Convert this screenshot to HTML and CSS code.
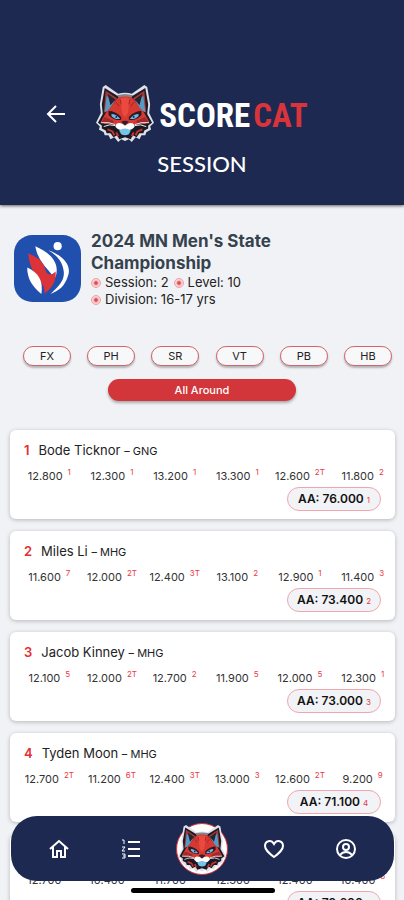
FILE: index.html
```
<!DOCTYPE html>
<html lang="en">
<head>
    <meta charset="UTF-8">
    <meta name="viewport" content="width=device-width, initial-scale=1">
    <title>ScoreCat - Session</title>
    <link rel="stylesheet" href="styles.css">
</head>
<body>
<svg class="sprite" aria-hidden="true">
    <symbol id="cat" viewBox="0 0 60 60">
        <path d="M7 2 L10 0 L23 9 Q30 7 37 9 L50 0 L53 2 L56 20 L55 29 L60 39 L56 43 L57 46 L52 49 L51 52 L47 52 L45 56 L41 54 L37 59 L34 56 L30 58 L26 56 L23 59 L19 54 L15 56 L13 52 L9 52 L8 49 L3 46 L4 43 L0 39 L5 29 L4 20Z" fill="#dfe1e8"/>
        <path d="M9 3 L22 11 Q30 9 38 11 L51 3 L54 20 L53 30 L58 39 L54 42 L54 45 L50 47 L49 50 L45 50 L42 54 L38 52 L36 56 L30 54 L24 56 L22 52 L18 54 L15 50 L11 50 L10 47 L6 45 L6 42 L2 39 L7 30 L6 20Z" fill="#1c1a22"/>
        <path d="M22 11 Q30 8 38 11 L36 14 H24Z" fill="#85858d"/>
        <path d="M10 6 L22 14 L14 25 L8 29Z M50 6 L38 14 L46 25 L52 29Z" fill="#a8363a"/>
        <path d="M11 11 L19 17 L13 27 L9 28Z M49 11 L41 17 L47 27 L51 28Z" fill="#5799c2"/>
        <path d="M12 9 L20 15 L15 21Z M48 9 L40 15 L45 21Z" fill="#22242f"/>
        <path d="M23 13 Q30 11 37 13 L45 23 L50 29 L55 38 L48 42 L38 42 L34 45 H26 L22 42 L12 42 L5 38 L10 29 L15 23Z" fill="#d73831"/>
        <path d="M25 14 Q30 12 35 14 L33 29 L30 34 L27 29Z" fill="#ea4a3d"/>
        <path d="M9 33 L18 37 L18 41 L6 38Z M51 33 L42 37 L42 41 L54 38Z" fill="#9d2a2c"/>
        <path d="M25 15 L26 20 M35 15 L34 20 M21 18 L24 22 M39 18 L36 22" stroke="#9a2528" stroke-width="1"/>
        <path d="M13 27 Q20 27 26 33 L26 36 Q18 37 13 31Z M47 27 Q40 27 34 33 L34 36 Q42 37 47 31Z" fill="#2a1a22"/>
        <path d="M16 30 Q21 30 25 35 Q19 36 16 32Z M44 30 Q39 30 35 35 Q41 36 44 32Z" fill="#6db9e2"/>
        <circle cx="21" cy="33" r="1" fill="#142344"/>
        <circle cx="39" cy="33" r="1" fill="#142344"/>
        <path d="M6 40 L20 41 L23 43 L27 46 H33 L37 43 L40 41 L54 40 L50 45 L43 47 L38 52 H22 L17 47 L10 45Z" fill="#191922"/>
        <path d="M5 39 Q14 38 20 41 M8 43 Q14 40 20 42 M55 39 Q46 38 40 41 M52 43 Q46 40 40 42" stroke="#eceef3" stroke-width="1" fill="none"/>
        <path d="M27 40 Q21 38 20 43 Q23 48 30 46 Q37 48 40 43 Q39 38 33 40 L30 42Z" fill="#fff"/>
        <path d="M26 38 Q30 36 34 38 L30 42Z" fill="#30202a"/>
        <path d="M24 47 Q30 43 36 47 L34 51 Q30 53 26 51Z" fill="#76c4e9"/>
        <path d="M12 46 L17 48 L19 52 M48 46 L43 48 L41 52 M21 49 L23 53 M39 49 L37 53" stroke="#c63334" stroke-width="2" fill="none"/>
    </symbol>
</svg>

<header class="header">
    <div class="brand-row">
        <button class="back" aria-label="Back">
            <svg viewBox="0 0 20 20"><path d="M19 10H2M10 2L2 10l8 8"/></svg>
        </button>
        <div class="brand">
            <svg class="brand-cat"><use href="#cat"/></svg>
            <span class="wordmark">SCORE<span class="red">CAT</span></span>
        </div>
    </div>
    <h1>SESSION</h1>
</header>

<main>
    <section class="event">
        <svg class="event-logo" viewBox="0 0 66 66">
            <rect width="66" height="66" rx="18" fill="#204fae"/>
            <circle cx="43" cy="11" r="4" fill="#fff"/>
            <path d="M21 11 C35 17 43 26 42 36 C42 39 41 41 40 43 C35 34 24 28 21 11Z" fill="#fff"/>
            <path d="M14 18 C22 22 29 24 31 35 C33 40 37 40 41 36 C42 47 36 53 30 58 C32 45 16 43 14 18Z" fill="#dc3338"/>
            <path d="M13 32 C24 37 29 45 27 58 C18 51 13 43 13 32Z" fill="#fff"/>
            <path d="M34 15 C50 21 57 31 53 41 C50 50 45 55 36 58 C45 50 50 44 49 36 C48 26 42 20 34 15Z" fill="#fff"/>
        </svg>
        <div class="event-text">
            <h2>2024 MN Men's State Championship</h2>
            <ul class="meta">
                <li>Session: 2</li>
                <li>Level: 10</li>
                <li>Division: 16-17 yrs</li>
            </ul>
        </div>
    </section>

    <div class="filters">
        <button>FX</button>
        <button>PH</button>
        <button>SR</button>
        <button>VT</button>
        <button>PB</button>
        <button>HB</button>
    </div>
    <button class="all-around">All Around</button>

    <section class="cards">
        <article class="card">
            <h3><span class="rank">1</span>Bode Ticknor <small>– GNG</small></h3>
            <div class="scores">
                <span>12.800<sup>1</sup></span><span>12.300<sup>1</sup></span><span>13.200<sup>1</sup></span>
                <span>13.300<sup>1</sup></span><span>12.600<sup>2T</sup></span><span>11.800<sup>2</sup></span>
            </div>
            <div class="total">AA: 76.000 <span>1</span></div>
        </article>
        <article class="card">
            <h3><span class="rank">2</span>Miles Li <small>– MHG</small></h3>
            <div class="scores">
                <span>11.600<sup>7</sup></span><span>12.000<sup>2T</sup></span><span>12.400<sup>3T</sup></span>
                <span>13.100<sup>2</sup></span><span>12.900<sup>1</sup></span><span>11.400<sup>3</sup></span>
            </div>
            <div class="total">AA: 73.400 <span>2</span></div>
        </article>
        <article class="card">
            <h3><span class="rank">3</span>Jacob Kinney <small>– MHG</small></h3>
            <div class="scores">
                <span>12.100<sup>5</sup></span><span>12.000<sup>2T</sup></span><span>12.700<sup>2</sup></span>
                <span>11.900<sup>5</sup></span><span>12.000<sup>5</sup></span><span>12.300<sup>1</sup></span>
            </div>
            <div class="total">AA: 73.000 <span>3</span></div>
        </article>
        <article class="card">
            <h3><span class="rank">4</span>Tyden Moon <small>– MHG</small></h3>
            <div class="scores">
                <span>12.700<sup>2T</sup></span><span>11.200<sup>6T</sup></span><span>12.400<sup>3T</sup></span>
                <span>13.000<sup>3</sup></span><span>12.600<sup>2T</sup></span><span>9.200<sup>9</sup></span>
            </div>
            <div class="total">AA: 71.100 <span>4</span></div>
        </article>
        <article class="card">
            <h3><span class="rank">5</span></h3>
            <div class="scores">
                <span>12.700<sup>2</sup></span><span>10.400<sup>8</sup></span><span>11.700<sup>7</sup></span>
                <span>12.300<sup>7</sup></span><span>12.400<sup>4</sup></span><span>10.400<sup>6</sup></span>
            </div>
            <div class="total">AA: 70.600 <span>5</span></div>
        </article>
    </section>
</main>

<nav class="tabs">
    <a href="#home" aria-label="Home">
        <svg viewBox="0 0 20 20"><path d="M1 10L10 2l9 8M4 8v10h4v-6h4v6h4V8"/></svg>
    </a>
    <a href="#list" aria-label="Rankings">
        <svg viewBox="0 0 20 20"><path d="M7 3h12M7 10h12M7 17h12"/><path class="thin" d="M1 1h2v4M1 8h3L1 12h3M1 15h3v4H1M2 17h2"/></svg>
    </a>
    <a class="tab-cat" href="#scorecat" aria-label="ScoreCat">
        <svg><use href="#cat"/></svg>
    </a>
    <a href="#favorites" aria-label="Favorites">
        <svg viewBox="0 0 20 20"><path d="M10 18C5 14 1 11 1 7c0-5 6-7 9-2 3-5 9-3 9 2 0 4-4 7-9 11z"/></svg>
    </a>
    <a href="#profile" aria-label="Profile">
        <svg viewBox="0 0 20 20"><circle cx="10" cy="10" r="9"/><circle cx="10" cy="8" r="3"/><path d="M4 16c3-4 9-4 12 0"/></svg>
    </a>
</nav>
<div class="home-bar"></div>
</body>
</html>
```

FILE: styles.css
```
* {
    box-sizing: border-box;
}
body {
    margin: 0;
    height: 100vh;
    overflow: hidden;
    display: flex;
    flex-direction: column;
    background-color: #f0f2f6;
    color: #222;
    font-family: Inter, "Liberation Sans", sans-serif;
}
h1, h2, h3, ul {
    margin: 0;
    padding: 0;
}
button {
    font-family: inherit;
    cursor: pointer;
}
.sprite {
    position: absolute;
    width: 0;
    height: 0;
}

/* header */
.header {
    flex: none;
    padding: 85px 0 27px;
    background-color: #1d2951;
    color: #fff;
    box-shadow: 0 1px 3px rgba(0, 0, 0, 0.6);
}
.brand-row {
    display: grid;
    grid-template-columns: 1fr auto 1fr;
    align-items: center;
}
.back {
    justify-self: center;
    margin-left: 16px;
    padding: 0;
    width: 20px;
    height: 20px;
    border: none;
    background: none;
}
.back svg {
    display: block;
    fill: none;
    stroke: #fff;
    stroke-width: 2;
}
.brand {
    display: flex;
    align-items: center;
    gap: 5px;
}
.brand-cat {
    width: 58px;
    height: 58px;
}
.wordmark {
    padding-top: 4px;
    font: bold 33px/40px "Liberation Sans Narrow", "Roboto Condensed", Roboto, sans-serif;
}
.red {
    margin-left: 3px;
    color: #d9343b;
}
h1 {
    margin-top: 7px;
    font: 500 22px/28px Lato, sans-serif;
    text-align: center;
}

main {
    flex: 1;
    min-height: 0;
    overflow: hidden;
}

/* event */
.event {
    display: flex;
    gap: 10px;
    padding: 25px 14px 0;
}
.event-logo {
    flex: none;
    width: 67px;
    height: 67px;
    margin-top: 5px;
}
.event-text {
    max-width: 220px;
}
h2 {
    color: #35424e;
    font-size: 17px;
    line-height: 22px;
}
.meta {
    display: flex;
    flex-wrap: wrap;
    column-gap: 5px;
    list-style: none;
    font-size: 13px;
    line-height: 17px;
}
.meta li {
    display: flex;
    align-items: center;
    gap: 4px;
}
.meta li::before {
    content: "";
    width: 8px;
    height: 8px;
    border: 1px solid #f0a0a4;
    border-radius: 50%;
    background: radial-gradient(#e0484d 1px, #f8d5d8 3px);
}

/* event filters */
.filters {
    display: flex;
    justify-content: space-between;
    padding: 0 12px 0 23px;
    margin-top: 38px;
}
.filters button {
    width: 48px;
    height: 20px;
    padding: 0;
    border: 1px solid #d2646c;
    border-radius: 10px;
    background-color: #f7f8fa;
    color: #222;
    font-size: 11px;
    box-shadow: 0 2px 2px rgba(0, 0, 0, 0.25);
}
.all-around {
    display: block;
    width: 188px;
    height: 22px;
    margin: 13px auto 0;
    padding: 0;
    border: none;
    border-radius: 11px;
    background-color: #d2353a;
    color: #fff;
    font-size: 11px;
    font-weight: 500;
    box-shadow: 0 2px 3px rgba(0, 0, 0, 0.3);
}

/* cards */
.cards {
    display: flex;
    flex-direction: column;
    gap: 12px;
    padding: 29px 9px 0 10px;
}
.card {
    height: 89px;
    padding-top: 9px;
    border-radius: 6px;
    background-color: #fff;
    box-shadow: 0 1px 4px rgba(0, 0, 0, 0.25);
}
h3 {
    height: 22px;
    padding-left: 14px;
    font-size: 13px;
    font-weight: 400;
    line-height: 22px;
}
h3 small {
    font-size: 11px;
}
.rank {
    margin-right: 9px;
    color: #e3302f;
    font-weight: 600;
}
.scores {
    display: grid;
    grid-template-columns: repeat(6, 1fr);
    height: 26px;
    padding-left: 8px;
    padding-right: 1px;
    color: #333;
    font-size: 11px;
    line-height: 30px;
    text-align: center;
}
.scores sup {
    margin-left: 5px;
    color: #ea3b42;
    font-size: 8px;
    line-height: 1;
}
.total {
    width: 94px;
    height: 24px;
    margin-left: auto;
    margin-right: 14px;
    border: 1px solid #f0a6ac;
    border-radius: 12px;
    background-color: #f1f3f6;
    color: #111;
    font-size: 12px;
    font-weight: 600;
    line-height: 22px;
    text-align: center;
    white-space: nowrap;
}
.total span {
    color: #ea3b42;
    font-size: 8px;
    font-weight: 400;
}

/* bottom bar */
.tabs {
    position: fixed;
    right: 10px;
    bottom: 19px;
    left: 11px;
    height: 65px;
    padding: 0 12px;
    display: grid;
    grid-template-columns: repeat(5, 1fr);
    align-items: center;
    justify-items: center;
    border-radius: 26px;
    background-color: #1d2951;
}
.tabs a {
    display: flex;
}
.tabs svg {
    width: 20px;
    height: 20px;
    fill: none;
    stroke: #fff;
    stroke-width: 2;
}
.tabs .thin {
    stroke-width: 1;
}
.tabs .tab-cat {
    width: 52px;
    height: 52px;
    align-items: center;
    justify-content: center;
    border: 1px solid #d9343b;
    border-radius: 50%;
    background-color: #fff;
}
.tabs .tab-cat svg {
    width: 48px;
    height: 48px;
    stroke: none;
}
.home-bar {
    position: fixed;
    bottom: 7px;
    left: 50%;
    width: 144px;
    height: 5px;
    margin-left: -71px;
    border-radius: 3px;
    background-color: #000;
}
```
